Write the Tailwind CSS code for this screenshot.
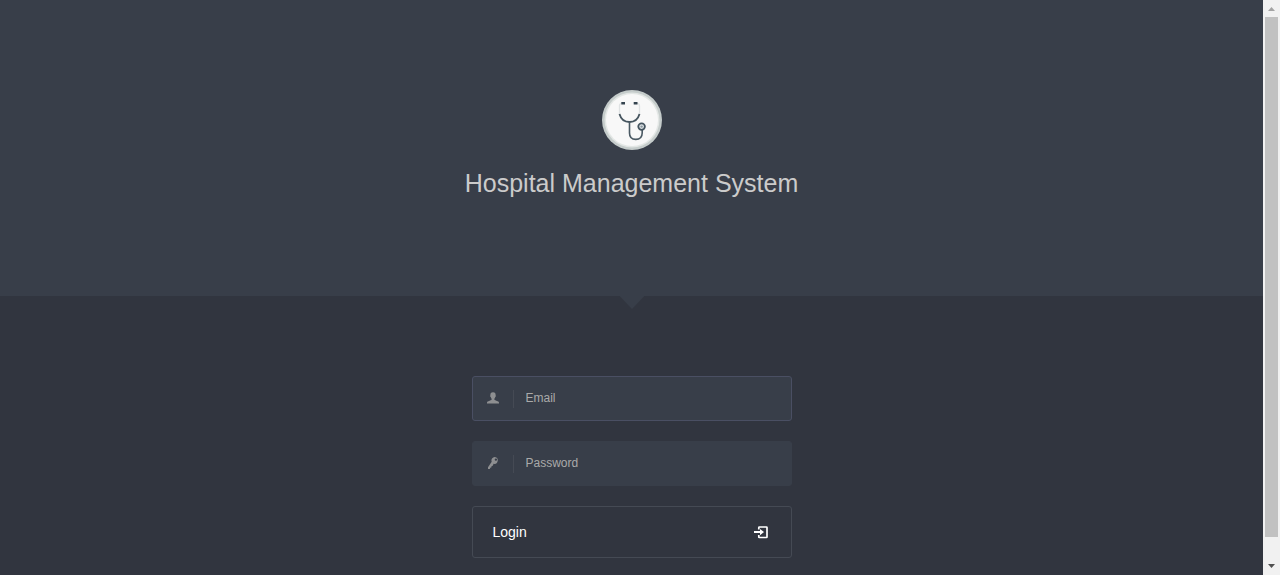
<!DOCTYPE html>
<html lang="en">
<head>
<meta charset="utf-8">
<meta name="viewport" content="width=device-width, initial-scale=1">
<title>Hospital Management System</title>
<script src="https://cdn.jsdelivr.net/npm/@tailwindcss/browser@4"></script>
</head>
<body class="flex h-screen overflow-hidden bg-[#31353f] font-['Liberation_Sans',Arial,sans-serif]">
<div class="min-w-0 flex-1 overflow-hidden">
  <header class="relative flex flex-col items-center bg-[#383e49] pt-[90px] pb-24">
    <svg class="size-[60px]" viewBox="0 0 60 60" fill="none" role="img" aria-label="Stethoscope">
      <circle cx="30" cy="30" r="30" fill="#c5cccb"/>
      <circle cx="30" cy="30" r="27.5" fill="#e3e7e5"/>
      <circle cx="30" cy="30" r="26" fill="#f8f8f8"/>
      <path d="M19.500 13.300Q17.500 13.500 17.500 16V25M35 13.300Q37.500 13.500 37.500 16V25" stroke="#dfe2e3" stroke-width="1.300"/>
      <path d="M17.500 24C19 29.500 23 32 27.500 32S36 29.500 37.500 24" stroke="#46555f" stroke-width="1.800"/>
      <path d="M27.500 32V43Q27.500 49.400 33.800 49.400T40.200 43V40" stroke="#4a5963" stroke-width="1.600"/>
      <path d="M19.300 13.300H23M31.700 13.300H35.500" stroke="#34434e" stroke-width="2.600"/>
      <circle cx="39.600" cy="36.600" r="3.300" fill="#dfe4e6" stroke="#44545f" stroke-width="1.800"/>
      <circle cx="39.600" cy="36.600" r="1.200" fill="#8b98a0"/>
    </svg>
    <h1 class="mt-4 text-[25px] leading-[34px] text-[#cbcbcb]">Hospital Management System</h1>
    <svg class="absolute top-full left-1/2 h-[13px] w-[25px] -translate-x-1/2" viewBox="0 0 26 13" preserveAspectRatio="none" aria-hidden="true"><path d="M0 0H26L13 13Z" fill="#383e49"/></svg>
  </header>
  <main class="px-4 pt-20">
    <form class="mx-auto flex w-full max-w-80 flex-col gap-5">
      <div class="flex h-[45px] items-center rounded-[3px] border border-[#4a4f63] bg-[#383e49]">
        <label for="email" class="flex h-[18px] w-[41px] items-center justify-center border-r border-[#454a54] pb-0.5" aria-label="Email">
          <svg class="size-3" viewBox="0 0 12 12" fill="#8e8f91" aria-hidden="true"><path d="M6 .2C4.100.2 3.200 1.400 3.400 3.200C3 3.400 3.200 4.800 3.700 5C3.900 5.900 4.300 6.400 4.600 6.700V7.800C4.200 8.700 0 8.900 0 10.800V11.500H12V10.800C12 8.900 7.800 8.700 7.400 7.800V6.700C7.700 6.400 8.100 5.900 8.300 5C8.800 4.800 9 3.400 8.600 3.200C8.800 1.400 7.900.2 6 .2Z"/></svg>
        </label>
        <input id="email" type="email" placeholder="Email" class="h-full min-w-0 flex-1 bg-transparent px-3 pb-0.5 text-xs text-[#aaaaaa] outline-none placeholder:text-[#aaaaaa]">
      </div>
      <div class="flex h-[45px] items-center rounded-[3px] border border-[#383e49] bg-[#383e49]">
        <label for="password" class="flex h-[18px] w-[41px] items-center justify-center border-r border-[#454a54] pb-0.5" aria-label="Password">
          <svg class="size-3" viewBox="0 0 12 12" fill="#8e8f91" aria-hidden="true"><path fill-rule="evenodd" d="M7.900 0A3.400 3.400 0 0 0 4.700 4.700L1 10.200V12H2.900L3.200 10.700L4.300 10.400L4.500 9.200L5.700 8.800L6.600 6.800A3.450 3.450 0 1 0 7.900 0ZM8.900 1.400A1.200 1.200 0 1 1 8.900 3.800A1.200 1.200 0 0 1 8.900 1.400Z"/></svg>
        </label>
        <input id="password" type="password" placeholder="Password" class="h-full min-w-0 flex-1 bg-transparent px-3 pb-0.5 text-xs text-[#aaaaaa] outline-none placeholder:text-[#aaaaaa]">
      </div>
      <button type="submit" class="flex h-[52px] items-center justify-between rounded-[3px] border border-[#454a54] pr-[23px] pl-5 text-sm text-white">
        <span>Login</span>
        <svg class="h-[14px] w-[14px]" viewBox="0 0 14 14" fill="none" aria-hidden="true"><path d="M4.800 4.500V2.600Q4.800 2 5.400 2H12.400Q13 2 13 2.600V11.900Q13 12.500 12.400 12.500H5.400Q4.800 12.500 4.800 11.900V10" stroke="#fff" stroke-width="1.700"/><path d="M0 6.100H6V3.900L10 7.100L6 10.300V8.100H0Z" fill="#fff"/></svg>
      </button>
    </form>
  </main>
</div>
<!-- Scroll track -->
<div class="flex w-[17px] shrink-0 flex-col items-center bg-[#f1f1f1]" aria-hidden="true">
  <svg class="size-[17px] shrink-0" viewBox="0 0 17 17"><path d="M5 11L8.500 7L12 11Z" fill="#a3a3a3"/></svg>
  <div class="w-[13px] flex-1 bg-[#c1c1c1]"></div>
  <svg class="mt-[21px] size-[17px] shrink-0" viewBox="0 0 17 17"><path d="M5 6L8.500 10L12 6Z" fill="#505050"/></svg>
</div>
</body>
</html>
